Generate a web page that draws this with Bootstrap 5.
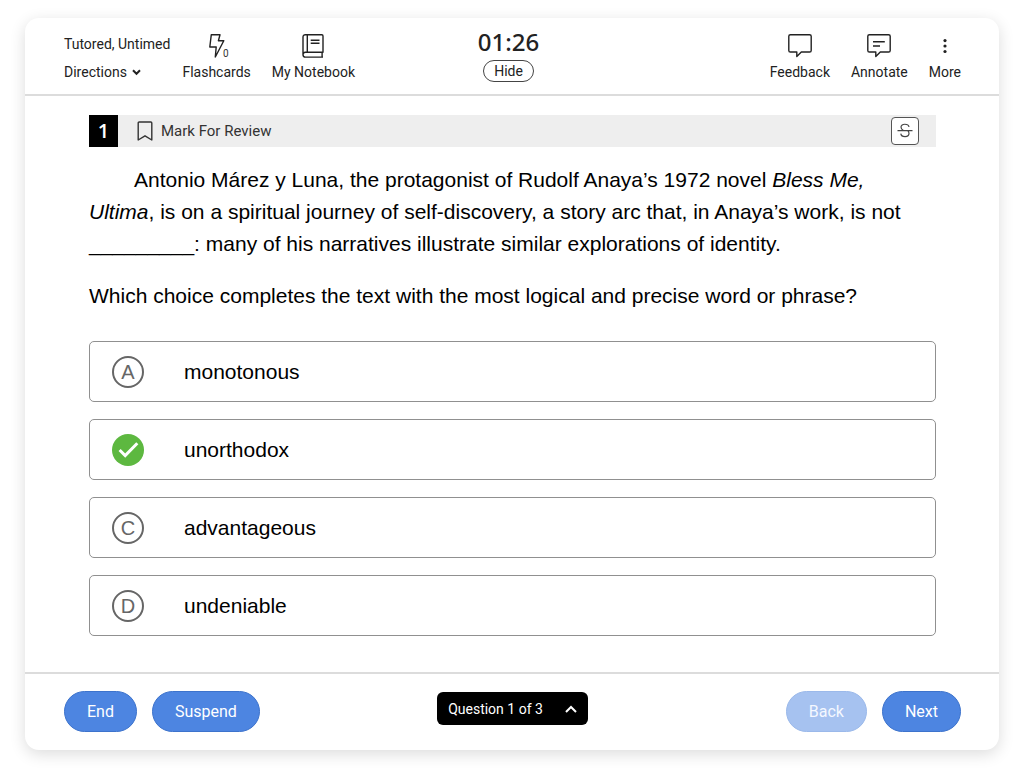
<!DOCTYPE html>
<html lang="en">
<head>
<meta charset="utf-8">
<meta name="viewport" content="width=device-width, initial-scale=1">
<title>Practice Question</title>
<link href="https://cdn.jsdelivr.net/npm/bootstrap@5.3.0/dist/css/bootstrap.min.css" rel="stylesheet">
<style>
  body { font-family: Roboto, "Liberation Sans", sans-serif; color: #222; background: #fff; font-size: 14px; line-height: 20px; }
  .panel { margin: 18px 25px; border-radius: 14px; background: #fff; box-shadow: 0 4px 16px rgba(0,0,0,.14); }
  .topbar { padding: 13px 38px 12px 39px; border-bottom: 2px solid #dcdcdc; }
  .bottombar { padding: 17px 38px 18px 39px; border-top: 2px solid #dcdcdc; }
  .tools { gap: 21px; }
  .tool { border: 0; background: none; padding: 0; color: #222; font-size: 14px; line-height: 20px; text-align: center; white-space: nowrap; }
  .tool svg { display: block; margin: 0 auto 4px; }
  .tool-label { display: block; }
  .mode-block { margin-right: -9px; }
  .mode { line-height: 20px; margin-top: 3px; margin-bottom: 8px; }
  .clock { font: 500 24px/22px "Noto Sans", sans-serif; margin-bottom: 7px; }
  .hide-btn { border: 1px solid #444; border-radius: 11px; background: #fff; color: #222; font-size: 14px; line-height: 20px; padding: 0 10px; }
  .questions { padding: 19px 63px 36px 64px; }
  .question-bar { background: #eee; font-size: 15px; margin-bottom: 17px; }
  .number-box { width: 29px; background: #000; color: #fff; font: 600 20px/32px "Open Sans", "Noto Sans", sans-serif; text-align: center; }
  .review { border: 0; background: none; padding: 0; margin-left: 19px; color: #333; font-size: 15px; }
  .strike-btn { border: 1px solid #555; border-radius: 4px; background: #fff; width: 28px; height: 28px; padding: 0; margin-right: 17px; }
  .passage { font: 21px/32px "Liberation Sans", Arial, sans-serif; color: #000; padding-right: 16px; }
  .passage p { margin: 0 0 20px; }
  .indented { text-indent: 45px; }
  .choices { gap: 17px; padding-top: 9px; }
  .choice { display: flex; align-items: center; height: 61px; border: 1px solid #909090; border-radius: 5px; padding-left: 22px; font: 21px/32px "Liberation Sans", Arial, sans-serif; color: #000; cursor: pointer; }
  .letter { width: 32px; height: 32px; border: 2px solid #666; border-radius: 50%; color: #666; font: 20px/28px "Liberation Sans", Arial, sans-serif; text-align: center; margin-right: 40px; }
  .tick { display: none; margin-right: 40px; }
  .btn-check:checked ~ .letter { display: none; }
  .btn-check:checked ~ .tick { display: block; }
  .choice:focus-within { border-color: #777; }
  .pills { gap: 15px; }
  .pill { height: 41px; border-radius: 21px; border: 1px solid #3d73cc; background: #4d85e1; color: #fff; font-size: 16px; line-height: 20px; padding: 0 22px; }
  .pill:disabled { background: #a6c2f0; border-color: #9bb9ea; color: #f4f8ff; }
  .jump { height: 33px; border: 0; border-radius: 6px; background: #000; color: #fff; font-size: 14px; padding: 0 11px; gap: 22px; margin-bottom: 6px; }
</style>
</head>
<body>
<div class="panel d-flex flex-column">
  <header class="topbar d-flex align-items-start">
    <div class="tools d-flex col align-items-start">
      <div class="mode-block text-nowrap">
        <div class="mode">Tutored, Untimed</div>
        <button class="tool d-flex align-items-center" type="button">Directions
          <svg class="ms-1 my-0" width="11" height="10" viewBox="0 0 11 10" fill="none" stroke="#222" stroke-width="2"><path d="M2 3.2 5.5 6.8 9 3.2"/></svg>
        </button>
      </div>
      <button class="tool" type="button">
        <svg width="28" height="27" viewBox="0 0 28 27" fill="none" stroke="#222" stroke-width="1.4" stroke-linejoin="round"><path d="M8.3 3.7H17L15.4 9.7H20.8L12.3 26L13.2 16H6.8Z"/><text x="20" y="26" font-family="Roboto, sans-serif" font-size="10" fill="#333" stroke="none">0</text></svg>
        <span class="tool-label">Flashcards</span>
      </button>
      <button class="tool" type="button">
        <svg width="24" height="27" viewBox="0 0 24 27" fill="none" stroke="#222" stroke-width="1.4" stroke-linejoin="round"><path d="M4.4 3.7H20.8Q22 3.7 22 4.9V21.3H4.4A2.4 2.4 0 0 0 4.4 26.1H22M2 23.7V6A2.3 2.3 0 0 1 4.4 3.7M6.3 3.7V21.3M21.1 21.3V26M9.7 9.2H18.5M9.7 12.3H18.5"/></svg>
        <span class="tool-label">My Notebook</span>
      </button>
    </div>
    <div class="d-flex flex-column align-items-center me-2">
      <div class="clock">01:26</div>
      <button class="hide-btn" type="button">Hide</button>
    </div>
    <div class="tools d-flex col justify-content-end">
      <button class="tool" type="button">
        <svg width="26" height="27" viewBox="0 0 26 27" fill="none" stroke="#222" stroke-width="1.4" stroke-linejoin="round"><path d="M3.4 3.7H22.6Q24.2 3.7 24.2 5.3V19.4Q24.2 21 22.6 21H14.3L9.8 25.4V21H3.4Q1.8 21 1.8 19.4V5.3Q1.8 3.7 3.4 3.7Z"/></svg>
        <span class="tool-label">Feedback</span>
      </button>
      <button class="tool" type="button">
        <svg width="26" height="27" viewBox="0 0 26 27" fill="none" stroke="#222" stroke-width="1.4" stroke-linejoin="round"><path d="M3.4 3.7H22.6Q24.2 3.7 24.2 5.3V19.4Q24.2 21 22.6 21H14.3L9.8 25.4V21H3.4Q1.8 21 1.8 19.4V5.3Q1.8 3.7 3.4 3.7ZM7 10.7H18.8M7 15H14"/></svg>
        <span class="tool-label">Annotate</span>
      </button>
      <button class="tool" type="button">
        <svg width="20" height="27" viewBox="0 0 20 27" fill="#222"><circle cx="10" cy="9.6" r="1.6"/><circle cx="10" cy="15" r="1.6"/><circle cx="10" cy="20.5" r="1.6"/></svg>
        <span class="tool-label">More</span>
      </button>
    </div>
  </header>

  <main class="questions">
    <div class="question-bar d-flex align-items-center">
      <div class="number-box">1</div>
      <button class="review d-flex align-items-center gap-2" type="button">
        <svg width="16" height="22" viewBox="0 0 16 22" fill="none" stroke="#333" stroke-width="1.4" stroke-linejoin="round"><path d="M2.2 2H13.8Q14.8 2 14.8 3V20L8 15.8L1.2 20V3Q1.2 2 2.2 2Z"/></svg>
        Mark For Review
      </button>
      <button class="strike-btn ms-auto d-flex align-items-center justify-content-center" type="button" aria-label="Strikethrough">
        <svg width="18" height="18" viewBox="0 0 18 18" fill="none" stroke="#444" stroke-width="1.2"><path d="M1.5 8.6H16.5M13 5C12.4 1.4 5 1.2 5 5.1C5 6.9 6 7.9 7.5 8.6M11.5 8.6C12.6 9.4 13 10.4 13 11.6C13 15.6 5.2 15.6 4.8 11.6"/></svg>
      </button>
    </div>
    <div class="passage">
      <p class="indented">Antonio Márez y Luna, the protagonist of Rudolf Anaya’s 1972 novel <i>Bless Me, Ultima</i>, is on a spiritual journey of self-discovery, a story arc that, in Anaya’s work, is not _________: many of his narratives illustrate similar explorations of identity.</p>
      <p id="prompt">Which choice completes the text with the most logical and precise word or phrase?</p>
    </div>
    <div class="choices d-grid" role="radiogroup" aria-labelledby="prompt">
      <label class="choice position-relative" for="choice-a"><input class="btn-check" type="radio" name="answer" id="choice-a"><span class="letter">A</span><svg class="tick" width="32" height="32" viewBox="0 0 32 32"><circle cx="16" cy="16" r="16" fill="#5db840"/><path d="M7.6 16 13.2 21.6 25.3 9.2" fill="none" stroke="#fff" stroke-width="3"/></svg>monotonous</label>
      <label class="choice position-relative" for="choice-b"><input class="btn-check" type="radio" name="answer" id="choice-b" checked><span class="letter">B</span><svg class="tick" width="32" height="32" viewBox="0 0 32 32"><circle cx="16" cy="16" r="16" fill="#5db840"/><path d="M7.6 16 13.2 21.6 25.3 9.2" fill="none" stroke="#fff" stroke-width="3"/></svg>unorthodox</label>
      <label class="choice position-relative" for="choice-c"><input class="btn-check" type="radio" name="answer" id="choice-c"><span class="letter">C</span><svg class="tick" width="32" height="32" viewBox="0 0 32 32"><circle cx="16" cy="16" r="16" fill="#5db840"/><path d="M7.6 16 13.2 21.6 25.3 9.2" fill="none" stroke="#fff" stroke-width="3"/></svg>advantageous</label>
      <label class="choice position-relative" for="choice-d"><input class="btn-check" type="radio" name="answer" id="choice-d"><span class="letter">D</span><svg class="tick" width="32" height="32" viewBox="0 0 32 32"><circle cx="16" cy="16" r="16" fill="#5db840"/><path d="M7.6 16 13.2 21.6 25.3 9.2" fill="none" stroke="#fff" stroke-width="3"/></svg>undeniable</label>
    </div>
  </main>

  <footer class="bottombar d-flex align-items-center">
    <div class="pills col d-flex">
      <button class="pill" type="button">End</button>
      <button class="pill" type="button">Suspend</button>
    </div>
    <button class="jump d-flex align-items-center" type="button">Question 1 of 3
      <svg width="12" height="10" viewBox="0 0 12 10" fill="none" stroke="#fff" stroke-width="2"><path d="M1 8 6 3 11 8"/></svg>
    </button>
    <div class="pills col d-flex justify-content-end">
      <button class="pill" type="button" disabled>Back</button>
      <button class="pill" type="button">Next</button>
    </div>
  </footer>
</div>
<script src="https://cdn.jsdelivr.net/npm/bootstrap@5.3.0/dist/js/bootstrap.bundle.min.js"></script>
</body>
</html>
